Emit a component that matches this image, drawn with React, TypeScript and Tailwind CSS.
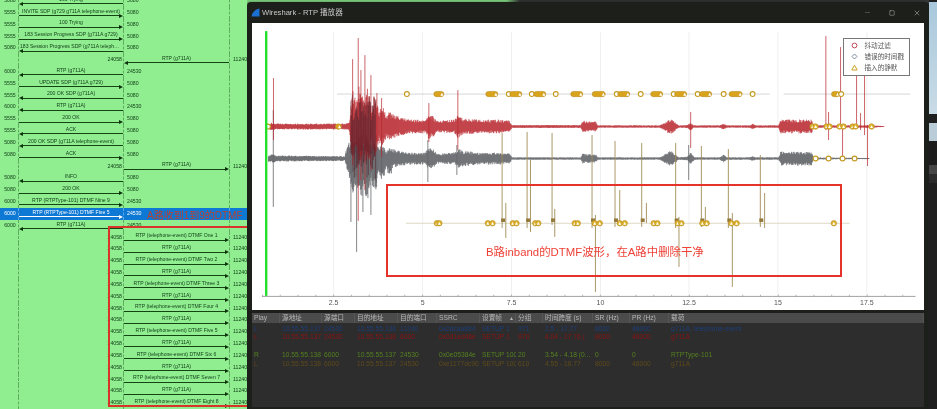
import { Minus, Square, X } from "lucide-react";

interface Message {
  label: string;
  from: string;
  to: string;
  dir: "left" | "right";
  col: 0 | 1;
}

const rtpLeg = (label: string): Message => ({ label, from: "24058", to: "11240", dir: "right", col: 1 });

const messages: Message[] = [
  { label: "100 Trying", from: "5080", to: "5080", dir: "left", col: 0 },
  { label: "INVITE SDP (g729 g711A telephone-event)", from: "5555", to: "5080", dir: "right", col: 0 },
  { label: "100 Trying", from: "5555", to: "5080", dir: "right", col: 0 },
  { label: "183 Session Progress SDP (g711A g729)", from: "5555", to: "5080", dir: "right", col: 0 },
  { label: "183 Session Progress SDP (g711A telephon...", from: "5080", to: "5080", dir: "left", col: 0 },
  { label: "RTP (g711A)", from: "24058", to: "11240", dir: "left", col: 1 },
  { label: "RTP (g711A)", from: "6000", to: "24530", dir: "left", col: 0 },
  { label: "UPDATE SDP (g711A g729)", from: "5555", to: "5080", dir: "right", col: 0 },
  { label: "200 OK SDP (g711A)", from: "5555", to: "5080", dir: "left", col: 0 },
  { label: "RTP (g711A)", from: "6000", to: "24530", dir: "left", col: 0 },
  { label: "200 OK", from: "5555", to: "5080", dir: "right", col: 0 },
  { label: "ACK", from: "5555", to: "5080", dir: "left", col: 0 },
  { label: "200 OK SDP (g711A telephone-event)", from: "5080", to: "5080", dir: "left", col: 0 },
  { label: "ACK", from: "5080", to: "5080", dir: "right", col: 0 },
  rtpLeg("RTP (g711A)"),
  { label: "INFO", from: "5080", to: "5080", dir: "left", col: 0 },
  { label: "200 OK", from: "5080", to: "5080", dir: "right", col: 0 },
  { label: "RTP (RTPType-101) DTMF Nine 9", from: "6000", to: "24530", dir: "right", col: 0 },
  { label: "RTP (RTPType-101) DTMF Five 5", from: "6000", to: "24530", dir: "right", col: 0 },
  { label: "RTP (g711A)", from: "6000", to: "24530", dir: "left", col: 0 },
  rtpLeg("RTP (telephone-event) DTMF One 1"),
  rtpLeg("RTP (g711A)"),
  rtpLeg("RTP (telephone-event) DTMF Two 2"),
  rtpLeg("RTP (g711A)"),
  rtpLeg("RTP (telephone-event) DTMF Three 3"),
  rtpLeg("RTP (g711A)"),
  rtpLeg("RTP (telephone-event) DTMF Four 4"),
  rtpLeg("RTP (g711A)"),
  rtpLeg("RTP (telephone-event) DTMF Five 5"),
  rtpLeg("RTP (g711A)"),
  rtpLeg("RTP (telephone-event) DTMF Six 6"),
  rtpLeg("RTP (g711A)"),
  rtpLeg("RTP (telephone-event) DTMF Seven 7"),
  rtpLeg("RTP (g711A)"),
  rtpLeg("RTP (telephone-event) DTMF Eight 8"),
];

const SELECTED = 18;

const Arrow = ({ message, selected }: { message: Message; selected: boolean }) => (
  <div className="flex h-full flex-col justify-end pb-[1px]">
    <div className="truncate px-[1px] text-center text-[5.1px] leading-[6px]">{message.label}</div>
    <div className="flex h-[4px] items-center">
      {message.dir === "left" && (
        <div
          className={`h-0 w-0 border-y-[2px] border-r-[4px] border-y-transparent ${
            selected ? "border-r-white" : "border-r-[#0c300c]"
          }`}
        />
      )}
      <div className={`h-[1px] flex-1 ${selected ? "bg-white" : "bg-[#124512]"}`} />
      {message.dir === "right" && (
        <div
          className={`h-0 w-0 border-y-[2px] border-l-[4px] border-y-transparent ${
            selected ? "border-l-white" : "border-l-[#0c300c]"
          }`}
        />
      )}
    </div>
  </div>
);

const SequencePanel = () => (
  <div className="relative h-full w-[247px] shrink-0 overflow-hidden bg-[#90ee90] text-[#0f3c16]">
    <div className="mt-[-5px]">
      {messages.map((m, i) => {
        const selected = i === SELECTED;
        const line = selected ? "border-[#5aa7e6]" : "border-[#5fae5f]";
        return (
          <div
            key={i}
            className={`grid h-[11.84px] grid-cols-[18px_105px_106px_18px] ${
              selected ? "bg-[#0e78d5] text-white" : ""
            }`}
          >
            <div className="flex items-center justify-center pl-[2px] text-[5.2px]">
              {m.col === 0 ? m.from : ""}
            </div>
            <div className={`min-w-0 border-l border-dashed ${line}`}>
              {m.col === 0 ? (
                <Arrow message={m} selected={selected} />
              ) : (
                <div className="flex h-full items-center justify-end pr-[1px] text-[5.2px]">{m.from}</div>
              )}
            </div>
            <div className={`min-w-0 border-l border-dashed ${line}`}>
              {m.col === 1 ? (
                <Arrow message={m} selected={selected} />
              ) : (
                <div className="flex h-full items-center pl-[3px] text-[5.2px]">{m.to}</div>
              )}
            </div>
            <div className={`flex items-center border-l border-dashed pl-[3px] text-[5.2px] ${line}`}>
              {m.col === 1 ? m.to : ""}
            </div>
          </div>
        );
      })}
    </div>

    {/* hand-drawn annotation on top of the diagram */}
    <div className="absolute left-[147px] top-[209px] whitespace-nowrap text-[10px] leading-[14px] text-[#b8402f]">
      A路收到1到9的DTMF
    </div>
    <div className="absolute left-[108px] top-[226px] h-[181px] w-[143px] border-2 border-[#d8342a]" />
  </div>
);

// small seeded generator so the wave form is the same on every run
let seed = 1234;
const rand = () => {
  seed = (seed * 16807) % 2147483647;
  return seed / 2147483647;
};

const interpolate = (points: number[][], x: number) => {
  if (x <= points[0][0] || x >= points[points.length - 1][0]) return 0;
  for (let i = 1; i < points.length; i++) {
    if (x <= points[i][0]) {
      const [x0, a0] = points[i - 1];
      const [x1, a1] = points[i];
      return a0 + ((a1 - a0) * (x - x0)) / (x1 - x0);
    }
  }
  return 0;
};

// the loud part at the start comes in lobes, not as a solid block
const lobes = (x: number) => (x > 349 && x < 392 ? 0.55 + 0.45 * Math.abs(Math.sin((x - 349) * 0.42)) : 1);

const buildWave = (points: number[][], center: number, spikes: number[][], burstDown = 1) => {
  let d = "";
  for (let x = points[0][0]; x < points[points.length - 1][0]; x += 0.5) {
    const env = interpolate(points, x) * lobes(x);
    const a = env * (0.55 + 0.45 * rand());
    const b = env * (0.55 + 0.45 * rand()) * (x > 349 && x < 392 ? burstDown : 1);
    d += `M${x} ${(center - a).toFixed(1)}V${(center + b).toFixed(1)}`;
  }
  spikes.forEach(([x, top, bottom]) => {
    d += `M${x} ${top}V${bottom}`;
  });
  return d;
};

const redEnvelope = [
  [268, 2.5], [272, 4], [276, 3], [340, 3], [349, 3.5], [352, 34], [358, 44], [365, 42], [372, 34], [380, 24], [388, 16],
  [396, 11], [410, 7], [425, 7], [429, 13], [433, 11], [437, 6], [455, 7], [458, 12], [463, 8], [480, 7], [500, 7],
  [510, 6], [512, 1.5], [581, 1.5], [583, 6], [596, 5], [598, 1.2], [660, 1.2], [666, 5], [671, 8], [676, 4], [679, 1.2],
  [688, 1.5], [691, 4], [694, 1.2], [720, 1.2], [724, 3], [727, 1.2], [750, 1.2], [753, 3], [756, 1.2], [779, 1.2], [781, 7],
  [812, 7], [814, 1.2], [870, 1.2], [885, 0.4],
];

const grayEnvelope = [
  [268, 3], [272, 4.5], [277, 3], [345, 2.5], [348, 17], [356, 24], [365, 26], [372, 22], [380, 16], [386, 11], [396, 9],
  [410, 6], [425, 6], [429, 11], [433, 10], [437, 5], [455, 6], [458, 10], [463, 8], [480, 6], [500, 6],
  [510, 5], [512, 1.2], [581, 1.2], [583, 5], [596, 4], [598, 1.2], [660, 1.2], [666, 5], [671, 8], [676, 4], [679, 1.2],
  [688, 2], [691, 7], [695, 1.2], [720, 1.2], [724, 4], [727, 1.2], [750, 1.2], [753, 3], [756, 1.2], [779, 1.2], [781, 7],
  [812, 7], [814, 1], [870, 0.6],
];

const redSpikes = [
  [273.5, 78, 140], [352.7, 59, 165], [358.3, 38, 221], [361, 70, 180], [365, 55, 190], [371, 75, 170], [377, 93, 150],
  [381.7, 98, 157], [429, 103, 142], [458, 90, 150], [691, 112, 148], [826.3, 36, 130], [829, 112, 140], [841, 47, 127],
  [857, 73, 125], [865, 73, 135], [861, 113, 130], [868, 125, 166], [843, 127, 160],
];

const graySpikes = [
  [273.3, 110, 207], [351, 125, 222], [356.7, 130, 252], [363, 130, 212], [371, 130, 215], [376.7, 135, 187],
  [381.7, 140, 173], [428, 140, 182], [457, 145, 175], [689, 145, 180],
];

// dark band where the two loud channels sit on top of each other
const buildOverlap = () => {
  let d = "";
  for (let x = 351; x < 376; x += 0.7) {
    const top = 122 - 28 * lobes(x) * rand();
    const bottom = 150 + 32 * lobes(x) * rand();
    d += `M${x.toFixed(1)} ${top.toFixed(1)}V${bottom.toFixed(1)}`;
  }
  return d;
};

const redWave = buildWave(redEnvelope, 126.5, redSpikes);
const grayWave = buildWave(grayEnvelope, 158.5, graySpikes, 1.7);
const overlapWave = buildOverlap();

const tanSpikes = [
  [502.3, 133, 228], [506, 203, 238], [527.3, 132, 228], [530.7, 160, 232], [552.3, 133, 225], [555, 209, 237],
  [592.3, 135, 228], [595.7, 215, 292], [615.3, 141, 227], [620, 190, 225], [642, 143, 227], [646.7, 203, 223],
  [676, 143, 228], [679.3, 217, 267], [701.7, 146, 227], [705.7, 207, 225], [728.7, 149, 228], [732.7, 213, 287],
  [760.7, 155, 227], [765, 193, 228],
];

const Pill = ({ x, y, w = 12 }: { x: number; y: number; w?: number }) => (
  <g>
    <rect x={x - w / 2} y={y - 2.6} width={w} height={5.2} rx={2.6} fill="#d9a31c" stroke="#b78c22" strokeWidth={0.6} />
    <path d={`M${x + w / 2 - 3.5} ${y + 1.8}l1.6-3 1.6 3z`} fill="#fff" />
  </g>
);

const Ring = ({ x, y, r = 2.4 }: { x: number; y: number; r?: number }) => (
  <circle cx={x} cy={y} r={r} fill="#fff" stroke="#c49a1e" strokeWidth={1.1} />
);

// filled marker with the white triangle of the "inserted silence" symbol
const Dot = ({ x, y }: { x: number; y: number }) => (
  <g>
    <circle cx={x} cy={y} r={2.7} fill="#e2b62f" stroke="#b78c22" strokeWidth={0.7} />
    <path d={`M${x - 1.5} ${y + 1.5}l1.5-2.8 1.5 2.8z`} fill="#fff" />
  </g>
);

const Plot = () => (
  <svg viewBox="252 23 672 287" className="h-full w-full">
    {[333.7, 422.7, 511.7, 600.7, 689.3, 778.3, 867.3].map((x) => (
      <line key={x} x1={x} x2={x} y1={32} y2={296} stroke="#ececec" strokeWidth={0.8} />
    ))}

    <path d="M337 94H575M582 94H770M784 94H911" stroke="#c4c4c4" strokeWidth={0.7} />
    <path d="M406 223.3H850" stroke="#ddd8c4" strokeWidth={1} />

    <path d={grayWave} stroke="#63666a" strokeWidth={0.8} fill="none" />
    <path d={redWave} stroke="#b9282f" strokeWidth={0.8} fill="none" opacity={0.9} />
    <path d={overlapWave} stroke="#55242c" strokeWidth={0.7} fill="none" opacity={0.8} />

    {tanSpikes.map(([x, top, bottom]) => (
      <line key={x} x1={x} x2={x} y1={top} y2={bottom} stroke="#a08c55" strokeWidth={0.9} />
    ))}
    {[502.3, 527.3, 552.3, 592.3, 615.3, 642, 676, 701.7, 728.7, 760.7].map((x) => (
      <rect key={x} x={x - 1} y={218.5} width={4} height={3.5} fill="#93793a" />
    ))}

    {/* top track */}
    <Ring x={407} y={94} />
    <Pill x={439} y={94} w={10} />
    <Pill x={492} y={94} />
    <Ring x={509} y={94} />
    <Pill x={516} y={94} />
    <Ring x={532} y={94} />
    <Pill x={540} y={94} />
    <Ring x={556} y={94} />
    <Pill x={577} y={94} />
    <Pill x={599} y={94} w={13} />
    <Ring x={617} y={94} />
    <Pill x={624} y={94} />
    <Ring x={641} y={94} />
    <Pill x={657} y={94} />
    <Ring x={674} y={94} />
    <Pill x={681} y={94} />
    <Ring x={698} y={94} />
    <Pill x={706} y={94} />
    <Ring x={724} y={94} />
    <Pill x={736} y={94} w={13} />
    <Ring x={753} y={94} />
    <Pill x={836} y={94} w={8} />
    <Ring x={841.6} y={94} />

    {/* red track */}
    <Ring x={268} y={126.5} />
    <Pill x={338.5} y={126.5} w={6} />
    {[813, 816, 827, 830, 840, 844, 853, 856, 872].map((x) => (
      <Dot key={x} x={x} y={126.5} />
    ))}

    {/* gray track */}
    {[816, 829, 843, 855].map((x) => (
      <Ring key={x} x={x} y={158.5} />
    ))}

    {/* bottom track */}
    {[437, 439.5, 488, 492.7, 513, 516.7, 535.5, 538.5, 575, 578, 595, 600, 620, 625, 654, 657.7, 678, 681.7, 702.7, 707, 731.7, 737, 834.3].map(
      (x) => (
        <Dot key={x} x={x} y={223.3} />
      ),
    )}

    <rect x={265} y={31} width={2.4} height={265} fill="#24e02c" />

    <line x1={262} x2={916} y1={296.5} y2={296.5} stroke="#8a8a8a" strokeWidth={0.8} />
    {Array.from({ length: 37 }, (_, i) => (
      <line
        key={i}
        x1={262.5 + i * 17.8}
        x2={262.5 + i * 17.8}
        y1={294.8}
        y2={296.5}
        stroke="#8a8a8a"
        strokeWidth={0.6}
      />
    ))}
    {[
      [333.7, "2.5"],
      [422.7, "5"],
      [511.7, "7.5"],
      [600.7, "10"],
      [689.3, "12.5"],
      [778.3, "15"],
      [867.3, "17.5"],
    ].map(([x, label]) => (
      <text key={label} x={x} y={305} textAnchor="middle" fontSize={7} fill="#555">
        {label}
      </text>
    ))}
  </svg>
);

const Legend = () => (
  <div className="absolute left-[590.5px] top-[14.5px] flex h-[38px] w-[67px] flex-col justify-center border border-[#777] bg-white pl-[7px] text-[6.6px] leading-[11.3px] text-[#555]">
    <div className="flex items-center gap-[7px]">
      <svg width="7" height="7" viewBox="0 0 7 7" className="shrink-0">
        <circle cx="3.5" cy="3.5" r="2.4" fill="none" stroke="#c0485a" />
      </svg>
      <span>抖动过滤</span>
    </div>
    <div className="flex items-center gap-[7px]">
      <svg width="7" height="7" viewBox="0 0 7 7" className="shrink-0">
        <path d="M3.5 1L6 3.5 3.5 6 1 3.5z" fill="none" stroke="#7c89a0" />
      </svg>
      <span className="whitespace-nowrap">错误的时间戳</span>
    </div>
    <div className="flex items-center gap-[7px]">
      <svg width="7" height="7" viewBox="0 0 7 7" className="shrink-0">
        <path d="M3.5 1.2L6.2 6H.8z" fill="none" stroke="#c9a227" />
      </svg>
      <span>插入的静默</span>
    </div>
  </div>
);

const columns = ["Play", "源地址", "源端口", "目的地址", "目的端口", "SSRC", "设置帧", "分组", "时间跨度 (s)", "SR (Hz)", "PR (Hz)", "载荷"];

const streams = [
  {
    color: "text-[#1d3f7c]",
    cells: ["L", "10.55.55.137", "24530", "10.55.55.138", "11240", "0x0dcaa884", "SETUP 1", "971", "2.5 - 17.77", "8000", "48000", "g711A, telephone-event"],
  },
  {
    color: "text-[#8a1416]",
    cells: ["L", "10.55.55.137", "24530", "10.55.55.138", "6000", "0x0d1ed46e", "SETUP 1", "970", "4.04 - 17.76 (", "8000", "48000", "g711A"],
  },
  { color: "text-transparent", cells: ["", "", "", "", "", "", "", "", "", "", "", ""] },
  {
    color: "text-[#55801f]",
    cells: ["R", "10.55.55.138", "6000", "10.55.55.137", "24530", "0x0e05384e", "SETUP 100", "20", "3.54 - 4.18 (0...", "0", "0", "RTPType-101"],
  },
  {
    color: "text-[#5f4a1a]",
    cells: ["L", "10.55.55.138", "6000", "10.55.55.137", "24530", "0xe1177dc90", "SETUP 100", "610", "4.55 - 16.77", "8000", "48000", "g711A"],
  },
];

const StreamTable = () => (
  <div className="flex-1 bg-[#2d2d2d] text-[6.7px]">
    <div className="grid h-[10px] grid-cols-[28px_42px_33px_43px_39px_43px_36px_27px_50px_37px_39px_1fr] bg-[#4b4b4b] leading-[10px] text-[#b8b8b8]">
      {columns.map((c, i) => (
        <div key={c} className="relative truncate border-r border-[#565656] pl-[2px]">
          {c}
          {i === 6 && <span className="absolute right-[1px] top-0 text-[5px]">▲</span>}
        </div>
      ))}
    </div>
    <div className="pt-[0.5px]">
      {streams.map((s, i) => (
        <div
          key={i}
          className={`grid h-[8.9px] grid-cols-[28px_42px_33px_43px_39px_43px_36px_27px_50px_37px_39px_1fr] whitespace-nowrap leading-[9px] ${s.color}`}
        >
          {s.cells.map((cell, j) => (
            <div key={j} className="overflow-hidden pl-[2px]">
              {cell}
            </div>
          ))}
        </div>
      ))}
    </div>
  </div>
);

const PlayerWindow = () => (
  <div className="h-full w-[682px] shrink-0 bg-[linear-gradient(90deg,#90ee90_38%,#3a3a3a_40%)]">
    <div className="mt-[2px] flex h-[407px] flex-col rounded-t-[4px] bg-[#1d1f1b] pb-[2px] pl-[5px] pr-[5.5px] shadow-[-3px_0_6px_rgba(0,0,0,0.55)]">
      <div className="flex h-[21px] shrink-0 items-center text-[#c8c8c8]">
        <svg width="9" height="9" viewBox="0 0 9 9" className="ml-[-1px] shrink-0">
          <path d="M0.5 8.5C1 4.5 3.5 1.5 8.5 0.5L8.5 8.5z" fill="#1a6fd0" />
        </svg>
        <span className="ml-[2px] text-[7.6px]">Wireshark - RTP 播放器</span>
        <div className="ml-auto flex items-center gap-[18px] pr-[3px]">
          <Minus size={7} strokeWidth={1.5} className="text-[#888]" />
          <Square size={6} strokeWidth={1.8} />
          <X size={8} strokeWidth={1.5} />
        </div>
      </div>

      <div className="relative h-[287px] shrink-0 bg-white">
        <Plot />
        <Legend />
        {/* annotation box drawn over the plot */}
        <div className="absolute left-[134px] top-[161px] flex h-[93px] w-[456px] items-center whitespace-nowrap border-2 border-[#e5332b] pl-[98px] pt-[45px] text-[11.4px] text-[#ee4036]">
          B路inband的DTMF波形，在A路中删除干净
        </div>
      </div>

      <div className="h-[3px] shrink-0" />
      <StreamTable />
    </div>
  </div>
);

const NeighbourSliver = () => (
  <div className="flex h-full flex-1 flex-col bg-[#1f1f1f]">
    <div className="mt-[2px] h-[112px] bg-[linear-gradient(180deg,#a9c8dc,#c9dbe6)]" />
    <div className="h-[9px]" />
    <div className="h-[18px] bg-[#b9ccd8]" />
    <div className="h-[24px] bg-[#1c1c1c]" />
    <div className="h-[9px] bg-[#454545]" />
    <div className="h-[9px] bg-[#2b2b2b]" />
  </div>
);

export default function App() {
  return (
    <div className="h-[409px] w-[937px] overflow-hidden bg-[#1f1f1f] font-['Liberation_Sans','Noto_Sans_CJK_SC',sans-serif]">
      <div className="flex h-full blur-[0.45px]">
        <SequencePanel />
        <PlayerWindow />
        <NeighbourSliver />
      </div>
    </div>
  );
}
